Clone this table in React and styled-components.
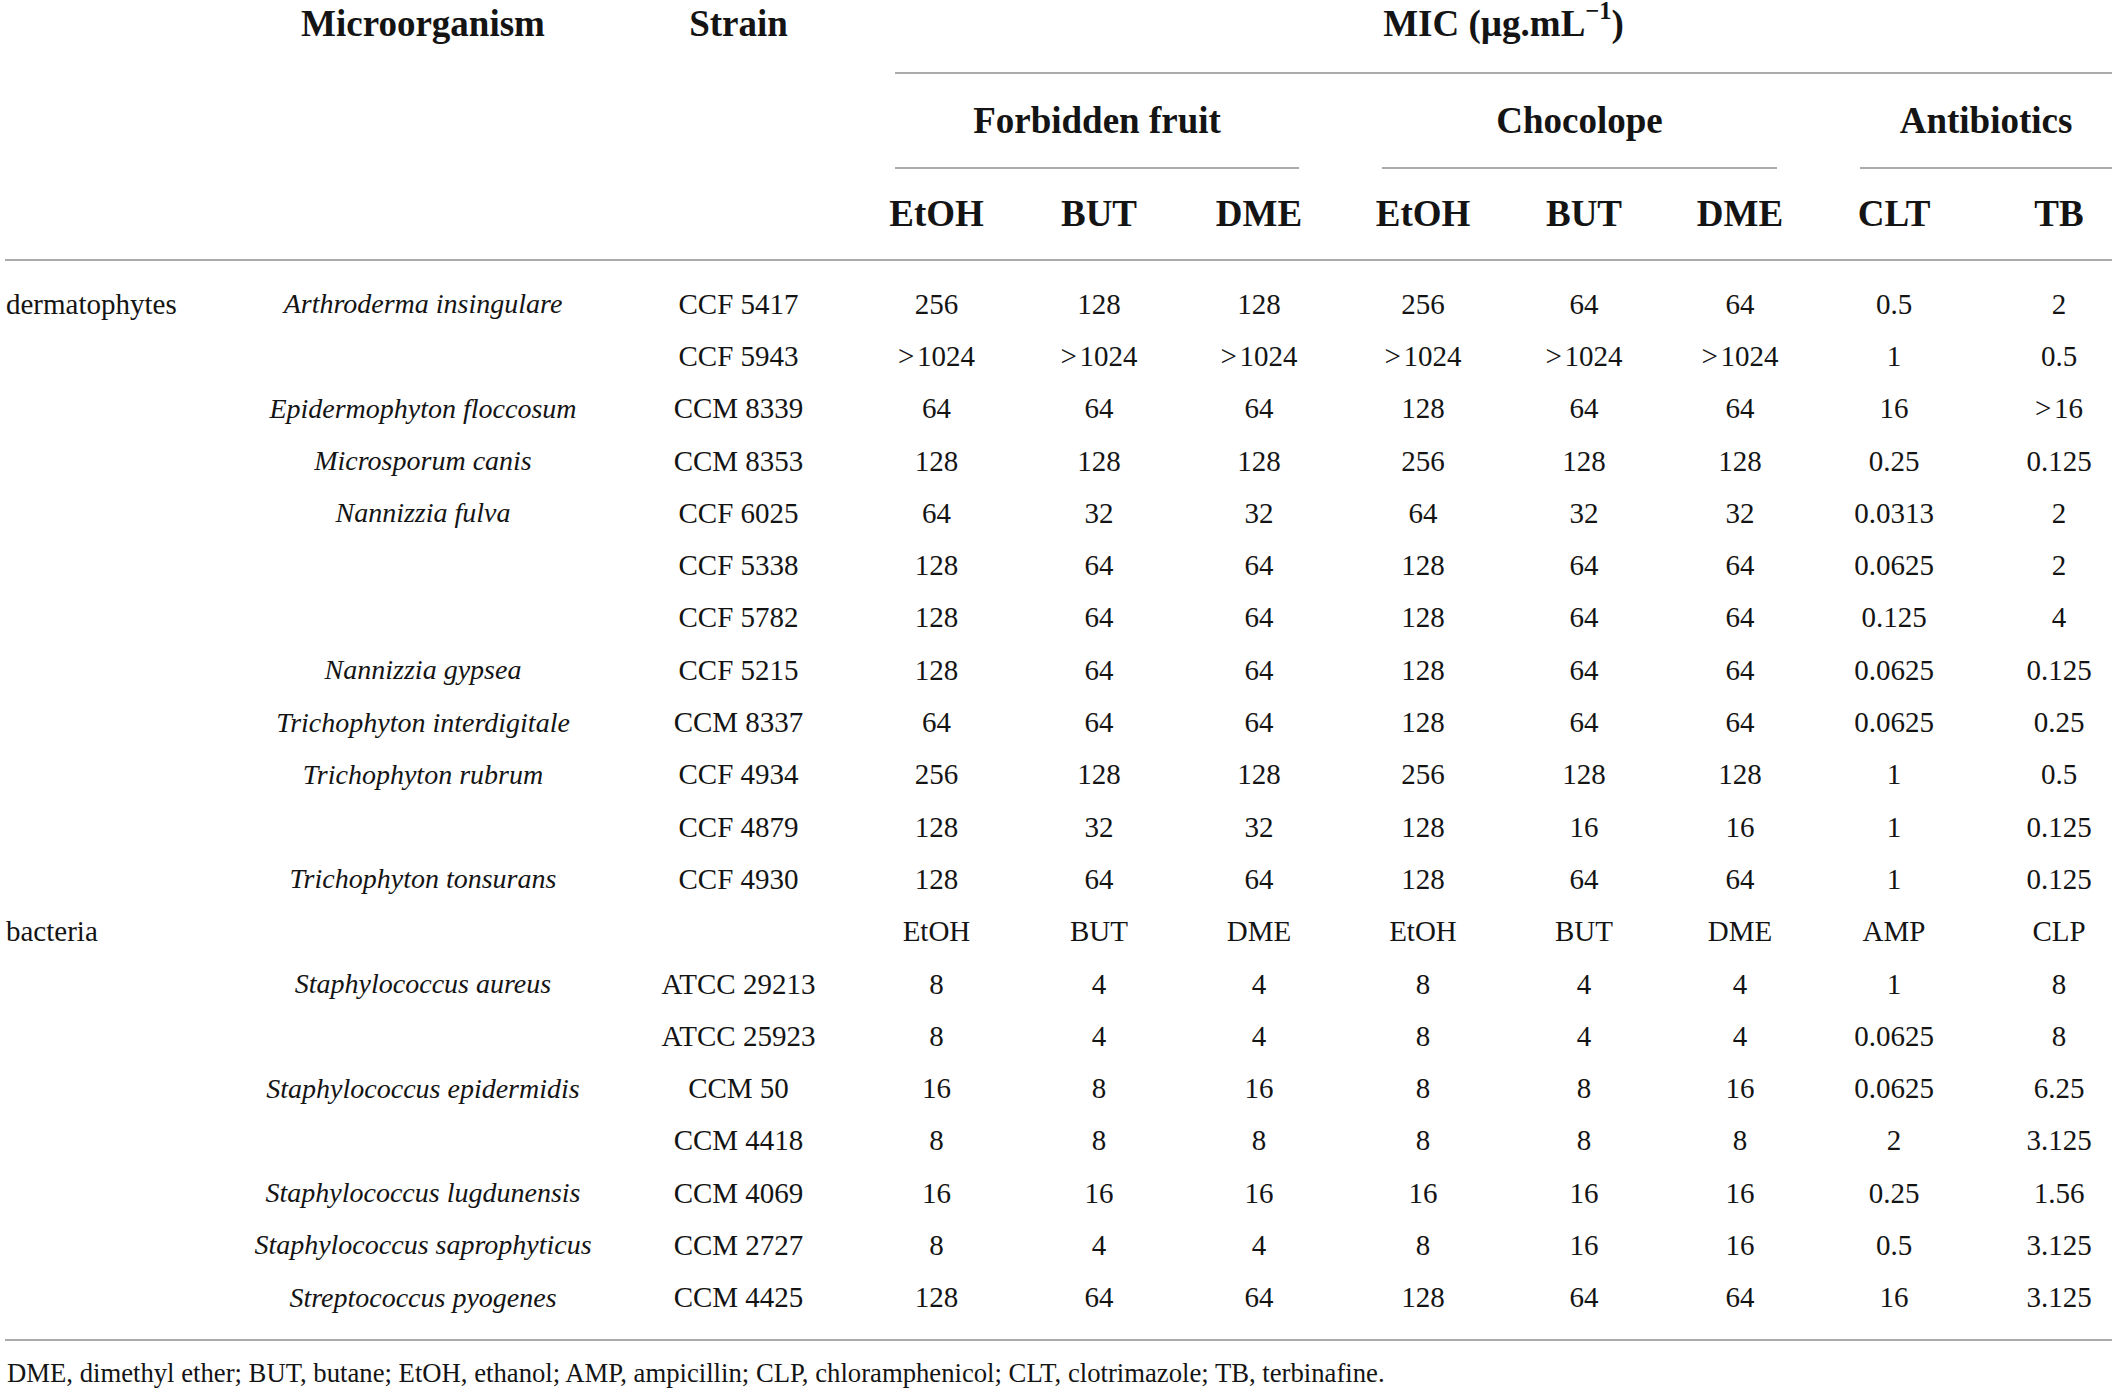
import React from "react";
import styled, { createGlobalStyle } from "styled-components";

const GlobalStyle = createGlobalStyle`
  body {
    margin: 0;
    background: #ffffff;
  }
`;

const RULE = "2px solid #ababab";

// column widths, left to right
const colWidths = [217, 402, 229, 167, 158, 162, 166, 156, 156, 152, 142];

const groups = [
  { label: "Forbidden fruit", right: 41 },
  { label: "Chocolope", right: 41 },
  { label: "Antibiotics", right: 0 },
];

const subHeads = ["EtOH", "BUT", "DME", "EtOH", "BUT", "DME", "CLT", "TB"];

const rows = [
  ["dermatophytes", "Arthroderma insingulare", "CCF 5417", "256", "128", "128", "256", "64", "64", "0.5", "2"],
  ["", "", "CCF 5943", ">\u200A1024", ">\u200A1024", ">\u200A1024", ">\u200A1024", ">\u200A1024", ">\u200A1024", "1", "0.5"],
  ["", "Epidermophyton floccosum", "CCM 8339", "64", "64", "64", "128", "64", "64", "16", ">\u200A16"],
  ["", "Microsporum canis", "CCM 8353", "128", "128", "128", "256", "128", "128", "0.25", "0.125"],
  ["", "Nannizzia fulva", "CCF 6025", "64", "32", "32", "64", "32", "32", "0.0313", "2"],
  ["", "", "CCF 5338", "128", "64", "64", "128", "64", "64", "0.0625", "2"],
  ["", "", "CCF 5782", "128", "64", "64", "128", "64", "64", "0.125", "4"],
  ["", "Nannizzia gypsea", "CCF 5215", "128", "64", "64", "128", "64", "64", "0.0625", "0.125"],
  ["", "Trichophyton interdigitale", "CCM 8337", "64", "64", "64", "128", "64", "64", "0.0625", "0.25"],
  ["", "Trichophyton rubrum", "CCF 4934", "256", "128", "128", "256", "128", "128", "1", "0.5"],
  ["", "", "CCF 4879", "128", "32", "32", "128", "16", "16", "1", "0.125"],
  ["", "Trichophyton tonsurans", "CCF 4930", "128", "64", "64", "128", "64", "64", "1", "0.125"],
  ["bacteria", "", "", "EtOH", "BUT", "DME", "EtOH", "BUT", "DME", "AMP", "CLP"],
  ["", "Staphylococcus aureus", "ATCC 29213", "8", "4", "4", "8", "4", "4", "1", "8"],
  ["", "", "ATCC 25923", "8", "4", "4", "8", "4", "4", "0.0625", "8"],
  ["", "Staphylococcus epidermidis", "CCM 50", "16", "8", "16", "8", "8", "16", "0.0625", "6.25"],
  ["", "", "CCM 4418", "8", "8", "8", "8", "8", "8", "2", "3.125"],
  ["", "Staphylococcus lugdunensis", "CCM 4069", "16", "16", "16", "16", "16", "16", "0.25", "1.56"],
  ["", "Staphylococcus saprophyticus", "CCM 2727", "8", "4", "4", "8", "16", "16", "0.5", "3.125"],
  ["", "Streptococcus pyogenes", "CCM 4425", "128", "64", "64", "128", "64", "64", "16", "3.125"],
];

const MicTable = () => {
  return (
    <Page>
      <GlobalStyle />
      <Table>
        <colgroup>
          {colWidths.map((w, i) => (
            <col key={i} style={{ width: w }} />
          ))}
        </colgroup>
        <thead>
          <tr>
            <CornerHead rowSpan={3} />
            <CornerHead rowSpan={3}>Microorganism</CornerHead>
            <CornerHead rowSpan={3}>Strain</CornerHead>
            <SpanHead colSpan={8} $left={42} $right={0}>
              <MicLabel>
                MIC (µg.mL<Sup>−1</Sup>)
              </MicLabel>
            </SpanHead>
          </tr>
          <tr>
            {groups.map((g, i) => (
              <SpanHead
                key={g.label}
                colSpan={i === 2 ? 2 : 3}
                $left={42}
                $right={g.right}
              >
                <GroupLabel>{g.label}</GroupLabel>
              </SpanHead>
            ))}
          </tr>
          <tr>
            {subHeads.map((s, i) => (
              <SubHead key={i}>{s}</SubHead>
            ))}
          </tr>
        </thead>
        <tbody>
          <Spacer>
            <td colSpan={11} />
          </Spacer>
          {rows.map((r, i) => (
            <DataRow key={i}>
              <GroupCell>{r[0]}</GroupCell>
              <SpeciesCell>{r[1]}</SpeciesCell>
              {r.slice(2).map((v, j) => (
                <ValueCell key={j}>{v}</ValueCell>
              ))}
            </DataRow>
          ))}
          <Spacer $last>
            <td colSpan={11} />
          </Spacer>
        </tbody>
      </Table>
      <Footnote>
        DME, dimethyl ether; BUT, butane; EtOH, ethanol; AMP, ampicillin; CLP,
        chloramphenicol; CLT, clotrimazole; TB, terbinafine.
      </Footnote>
    </Page>
  );
};

const Page = styled.div`
  width: 2117px;
  padding: 0 5px;
  box-sizing: border-box;
  font-family: "Liberation Serif", "Times New Roman", serif;
  color: #141414;
`;

const Table = styled.table`
  width: 2107px;
  table-layout: fixed;
  border-collapse: separate;
  border-spacing: 0;
`;

const HeadBase = styled.th`
  padding: 0;
  font-size: 37px;
  font-weight: 700;
  text-align: center;
  white-space: nowrap;
`;

const CornerHead = styled(HeadBase)`
  vertical-align: top;
  line-height: 48px;
  border-bottom: ${RULE};
`;

const SpanHead = styled(HeadBase)`
  padding-left: ${(p) => p.$left}px;
  padding-right: ${(p) => p.$right}px;
  vertical-align: bottom;
`;

const MicLabel = styled.div`
  height: 72px;
  line-height: 48px;
  border-bottom: ${RULE};
`;

const Sup = styled.sup`
  font-size: 0.66em;
  line-height: 0;
  vertical-align: 0.68em;
`;

const GroupLabel = styled.div`
  line-height: 93px;
  border-bottom: ${RULE};
`;

const SubHead = styled(HeadBase)`
  height: 90px;
  line-height: 90px;
  border-bottom: ${RULE};

  &:last-child {
    padding-left: 36px;
  }
`;

const Spacer = styled.tr`
  td {
    padding: 0;
    height: ${(p) => (p.$last ? 15 : 17)}px;
    border-bottom: ${(p) => (p.$last ? RULE : "none")};
  }
`;

const DataRow = styled.tr`
  height: 52.3px;
  font-size: 29px;

  td:last-child {
    padding-left: 36px;
  }
`;

const CellBase = styled.td`
  padding: 0;
  white-space: nowrap;
  vertical-align: middle;
`;

const GroupCell = styled(CellBase)`
  text-align: left;
  padding-left: 1px;
`;

const SpeciesCell = styled(CellBase)`
  text-align: center;
  font-style: italic;
  font-size: 28px;
`;

const ValueCell = styled(CellBase)`
  text-align: center;
`;

const Footnote = styled.p`
  margin: 16px 0 0 2px;
  font-size: 26.7px;
  line-height: 32px;
  white-space: nowrap;
`;

export default MicTable;
